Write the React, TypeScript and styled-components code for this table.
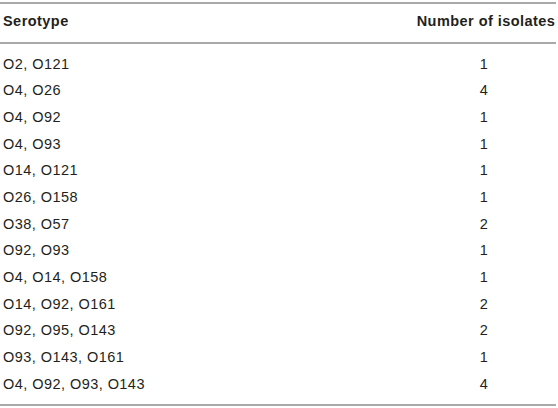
import React from "react";
import styled, { createGlobalStyle } from "styled-components";

const GlobalStyle = createGlobalStyle`
  html, body {
    margin: 0;
    padding: 0;
    background: #ffffff;
  }
  body {
    font-family: "Liberation Sans", Arial, Helvetica, sans-serif;
    color: #231f20;
  }
`;

const Page = styled.div`
  width: 558px;
  height: 408px;
  padding-top: 2px;
  box-sizing: border-box;
`;

const Table = styled.div`
  width: 556px;
  border-top: 2px solid #a9a9a9;
  border-bottom: 2px solid #a9a9a9;
`;

const HeaderRow = styled.div`
  display: grid;
  grid-template-columns: 1fr 140px;
  padding: 10px 0 13px;
  border-bottom: 2px solid #a9a9a9;
`;

const HeadCell = styled.div<{ $align?: "left" | "center" }>`
  font-size: 14.5px;
  line-height: 15px;
  font-weight: 700;
  letter-spacing: 0.45px;
  padding-left: ${(p) => (p.$align === "center" ? "0" : "3px")};
  text-align: ${(p) => p.$align ?? "left"};
  white-space: nowrap;
`;

const Body = styled.div`
  padding: 7px 0 6px;
`;

const Row = styled.div`
  display: grid;
  grid-template-columns: 1fr 140px;
  height: 26.67px;
  align-items: center;
`;

const Cell = styled.div<{ $align?: "left" | "center" }>`
  font-size: 14.5px;
  line-height: 15px;
  letter-spacing: 0.45px;
  padding-left: ${(p) => (p.$align === "center" ? "0" : "3px")};
  padding-right: ${(p) => (p.$align === "center" ? "4px" : "0")};
  text-align: ${(p) => p.$align ?? "left"};
  white-space: nowrap;
`;

const rows: [string, number][] = [
  ["O2, O121", 1],
  ["O4, O26", 4],
  ["O4, O92", 1],
  ["O4, O93", 1],
  ["O14, O121", 1],
  ["O26, O158", 1],
  ["O38, O57", 2],
  ["O92, O93", 1],
  ["O4, O14, O158", 1],
  ["O14, O92, O161", 2],
  ["O92, O95, O143", 2],
  ["O93, O143, O161", 1],
  ["O4, O92, O93, O143", 4],
];

export default function App() {
  return (
    <>
      <GlobalStyle />
      <Page>
        <Table>
          <HeaderRow>
            <HeadCell>Serotype</HeadCell>
            <HeadCell $align="center">Number of isolates</HeadCell>
          </HeaderRow>
          <Body>
            {rows.map(([s, n]) => (
              <Row key={s}>
                <Cell>{s}</Cell>
                <Cell $align="center">{n}</Cell>
              </Row>
            ))}
          </Body>
        </Table>
      </Page>
    </>
  );
}
